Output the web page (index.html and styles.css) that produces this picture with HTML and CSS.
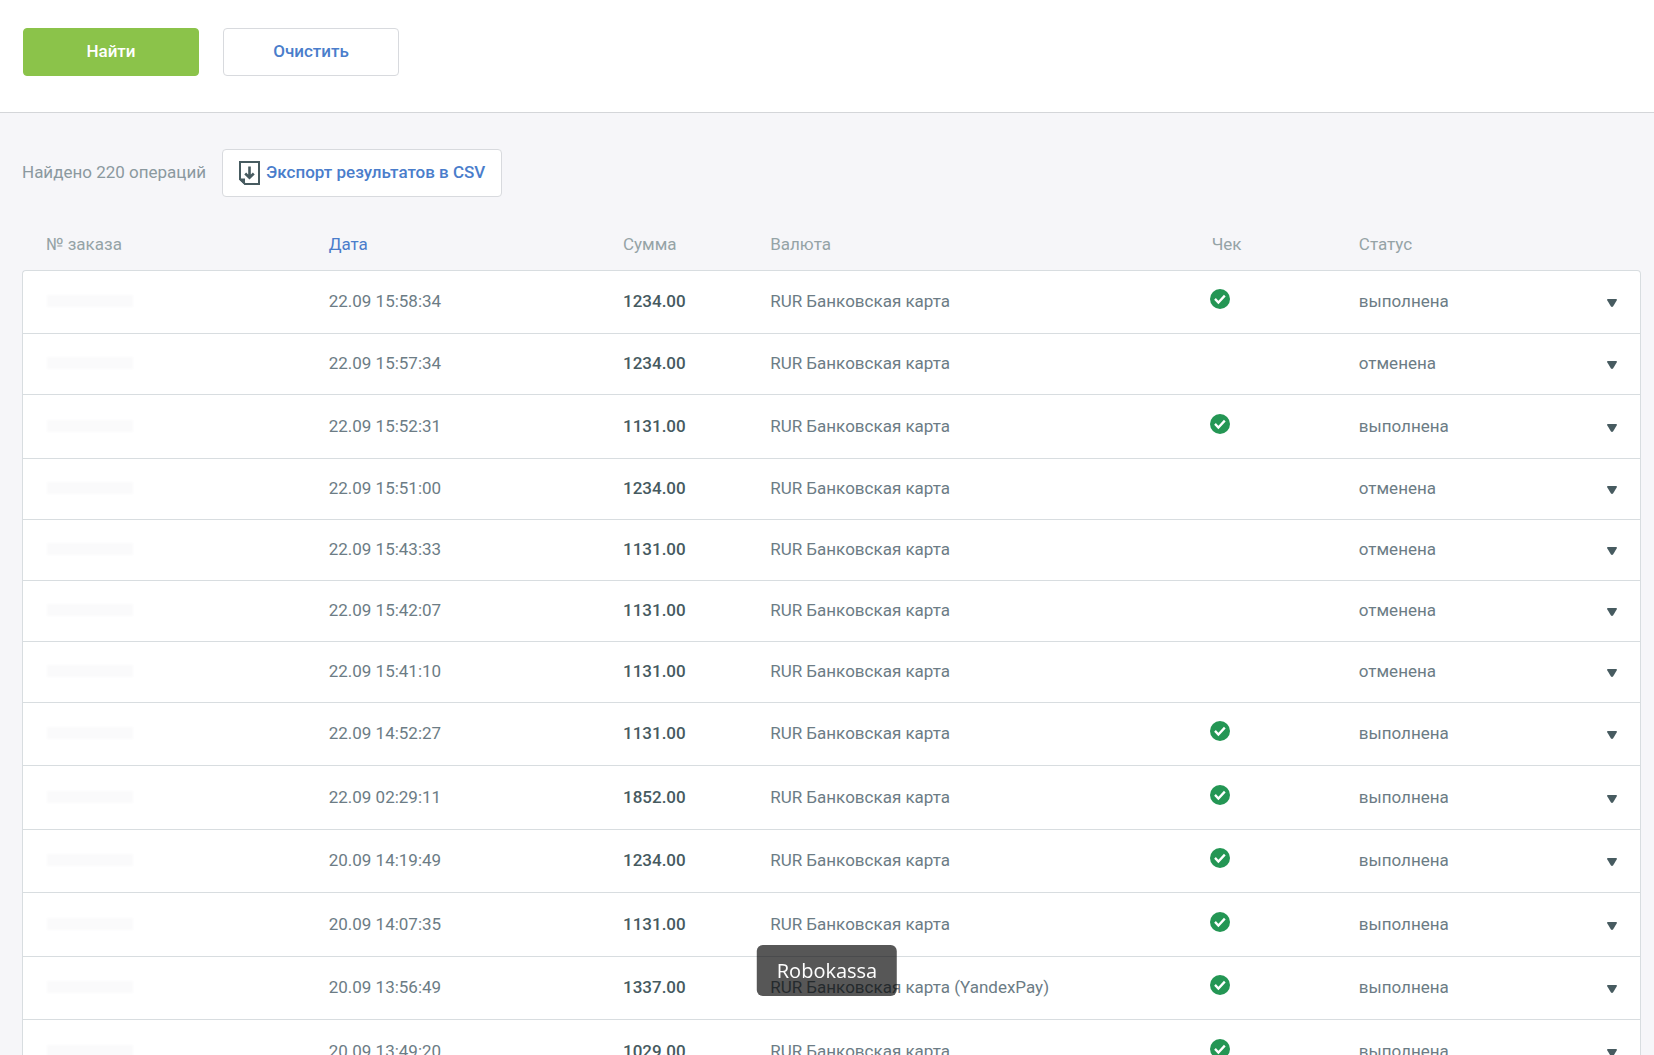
FILE: index.html
```html
<!DOCTYPE html>
<html lang="ru">
<head>
<meta charset="utf-8">
<meta name="viewport" content="width=device-width, initial-scale=1">
<title>Операции</title>
<link rel="stylesheet" href="styles.css">
</head>
<body>
<svg class="sprite" aria-hidden="true">
  <symbol id="check" viewBox="0 0 20 20">
    <circle cx="10" cy="10" r="10" fill="#249654"/>
    <path d="M5 9.900l3.400 3.700 6.400-7" fill="none" stroke="#fff" stroke-width="2.300"/>
  </symbol>
  <symbol id="arrow" viewBox="0 0 10 8">
    <path d="M1 0h8q1.400 0 .8 1.300L6.200 7.200q-1.200 1.400-2.400 0L.2 1.300Q-.4 0 1 0z" fill="#475b60"/>
  </symbol>
</svg>

<form class="filters">
  <button class="btn btn-primary" type="button">Найти</button>
  <button class="btn" type="reset">Очистить</button>
</form>

<main class="results">
  <div class="toolbar">
    <span class="found">Найдено 220 операций</span>
    <button class="btn btn-export" type="button">
      <svg class="icon-export" viewBox="0 0 21 24" aria-hidden="true">
        <path d="M1 1h19v22H6L1 18z" fill="none" stroke="#475b60" stroke-width="2"/>
        <path d="M0 17.500h6V24L0 18.500z" fill="#475b60"/>
        <path d="M10.500 5.500v11M6.200 12.500l4.300 4.200 4.300-4.200" fill="none" stroke="#475b60" stroke-width="2.600"/>
      </svg>
      <span>Экспорт результатов в CSV</span>
    </button>
  </div>

  <table class="operations">
    <colgroup>
      <col class="col-order"><col class="col-date"><col class="col-sum"><col class="col-currency"><col class="col-receipt"><col class="col-status"><col class="col-more">
    </colgroup>
    <thead>
      <tr><th>№ заказа</th><th><a href="#">Дата</a></th><th>Сумма</th><th>Валюта</th><th>Чек</th><th>Статус</th><th></th></tr>
    </thead>
    <tbody>
      <tr class="done"><td><span class="hidden-id"></span></td><td>22.09 15:58:34</td><td class="sum">1234.00</td><td>RUR Банковская карта</td><td class="receipt"><svg class="check"><use href="#check"/></svg></td><td>выполнена</td><td><button class="more" type="button" aria-label="Подробнее"><svg class="arrow"><use href="#arrow"/></svg></button></td></tr>
      <tr><td><span class="hidden-id"></span></td><td>22.09 15:57:34</td><td class="sum">1234.00</td><td>RUR Банковская карта</td><td></td><td>отменена</td><td><button class="more" type="button" aria-label="Подробнее"><svg class="arrow"><use href="#arrow"/></svg></button></td></tr>
      <tr class="done"><td><span class="hidden-id"></span></td><td>22.09 15:52:31</td><td class="sum">1131.00</td><td>RUR Банковская карта</td><td class="receipt"><svg class="check"><use href="#check"/></svg></td><td>выполнена</td><td><button class="more" type="button" aria-label="Подробнее"><svg class="arrow"><use href="#arrow"/></svg></button></td></tr>
      <tr><td><span class="hidden-id"></span></td><td>22.09 15:51:00</td><td class="sum">1234.00</td><td>RUR Банковская карта</td><td></td><td>отменена</td><td><button class="more" type="button" aria-label="Подробнее"><svg class="arrow"><use href="#arrow"/></svg></button></td></tr>
      <tr><td><span class="hidden-id"></span></td><td>22.09 15:43:33</td><td class="sum">1131.00</td><td>RUR Банковская карта</td><td></td><td>отменена</td><td><button class="more" type="button" aria-label="Подробнее"><svg class="arrow"><use href="#arrow"/></svg></button></td></tr>
      <tr><td><span class="hidden-id"></span></td><td>22.09 15:42:07</td><td class="sum">1131.00</td><td>RUR Банковская карта</td><td></td><td>отменена</td><td><button class="more" type="button" aria-label="Подробнее"><svg class="arrow"><use href="#arrow"/></svg></button></td></tr>
      <tr><td><span class="hidden-id"></span></td><td>22.09 15:41:10</td><td class="sum">1131.00</td><td>RUR Банковская карта</td><td></td><td>отменена</td><td><button class="more" type="button" aria-label="Подробнее"><svg class="arrow"><use href="#arrow"/></svg></button></td></tr>
      <tr class="done"><td><span class="hidden-id"></span></td><td>22.09 14:52:27</td><td class="sum">1131.00</td><td>RUR Банковская карта</td><td class="receipt"><svg class="check"><use href="#check"/></svg></td><td>выполнена</td><td><button class="more" type="button" aria-label="Подробнее"><svg class="arrow"><use href="#arrow"/></svg></button></td></tr>
      <tr class="done"><td><span class="hidden-id"></span></td><td>22.09 02:29:11</td><td class="sum">1852.00</td><td>RUR Банковская карта</td><td class="receipt"><svg class="check"><use href="#check"/></svg></td><td>выполнена</td><td><button class="more" type="button" aria-label="Подробнее"><svg class="arrow"><use href="#arrow"/></svg></button></td></tr>
      <tr class="done"><td><span class="hidden-id"></span></td><td>20.09 14:19:49</td><td class="sum">1234.00</td><td>RUR Банковская карта</td><td class="receipt"><svg class="check"><use href="#check"/></svg></td><td>выполнена</td><td><button class="more" type="button" aria-label="Подробнее"><svg class="arrow"><use href="#arrow"/></svg></button></td></tr>
      <tr class="done"><td><span class="hidden-id"></span></td><td>20.09 14:07:35</td><td class="sum">1131.00</td><td>RUR Банковская карта</td><td class="receipt"><svg class="check"><use href="#check"/></svg></td><td>выполнена</td><td><button class="more" type="button" aria-label="Подробнее"><svg class="arrow"><use href="#arrow"/></svg></button></td></tr>
      <tr class="done"><td><span class="hidden-id"></span></td><td>20.09 13:56:49</td><td class="sum">1337.00</td><td>RUR Банковская карта (YandexPay)</td><td class="receipt"><svg class="check"><use href="#check"/></svg></td><td>выполнена</td><td><button class="more" type="button" aria-label="Подробнее"><svg class="arrow"><use href="#arrow"/></svg></button></td></tr>
      <tr class="done"><td><span class="hidden-id"></span></td><td>20.09 13:49:20</td><td class="sum">1029.00</td><td>RUR Банковская карта</td><td class="receipt"><svg class="check"><use href="#check"/></svg></td><td>выполнена</td><td><button class="more" type="button" aria-label="Подробнее"><svg class="arrow"><use href="#arrow"/></svg></button></td></tr>
    </tbody>
  </table>
</main>

<div class="caption" role="tooltip">Robokassa</div>
</body>
</html>
```

FILE: styles.css
```css
* {
  box-sizing: border-box;
}

body {
  margin: 0;
  background: #f6f6f9;
  color: #6c7c85;
  font: 17px/20px Roboto, "Liberation Sans", sans-serif;
}

.sprite {
  display: none;
}

.filters {
  display: flex;
  gap: 24px;
  padding: 28px 23px 36px;
  background: #fff;
  border-bottom: 1px solid #d4d6d9;
}

.btn {
  display: flex;
  align-items: center;
  justify-content: center;
  width: 176px;
  height: 48px;
  padding: 0 0 2px;
  border: 1px solid #d8dade;
  border-radius: 4px;
  background: #fff;
  color: #4a7dcb;
  font: inherit;
  font-weight: 500;
  cursor: pointer;
}

.btn-primary {
  border-color: #8bc34a;
  background: #8bc34a;
  color: #fff;
}

.results {
  padding: 36px 13px 0 22px;
}

.toolbar {
  display: flex;
  align-items: center;
  gap: 16px;
}

.found {
  padding-bottom: 2px;
  color: #8b999f;
}

.btn-export {
  gap: 6px;
  width: auto;
  padding: 0 16px 2px;
}

.icon-export {
  width: 21px;
  height: 24px;
  margin-top: 2px;
}

.operations {
  width: 100%;
  margin-top: 24px;
  table-layout: fixed;
  border-collapse: separate;
  border-spacing: 0;
}

.col-order { width: 17.46%; }
.col-date { width: 18.18%; }
.col-sum { width: 9.09%; }
.col-currency { width: 27.27%; }
.col-receipt { width: 9.09%; }
.col-status { width: 13%; }
.col-more { width: 5.91%; }

th {
  height: 49px;
  padding: 0 0 4px 24px;
  color: #95a3a6;
  font-weight: 400;
  text-align: left;
}

th a {
  color: #4a7dcb;
  text-decoration: none;
}

td {
  height: 61px;
  padding: 0 0 2px 24px;
  background: #fff;
  border-bottom: 1px solid #d8dde0;
  vertical-align: middle;
  white-space: nowrap;
}

.done td {
  height: 64px;
}

.done:nth-child(even) td {
  height: 63px;
}

td:first-child {
  border-left: 1px solid #d8dde0;
}

td:last-child {
  padding: 0 23px 2px 0;
  border-right: 1px solid #d8dde0;
  text-align: right;
}

tbody tr:first-child td {
  border-top: 1px solid #d8dde0;
}

tbody tr:first-child td:first-child {
  border-top-left-radius: 4px;
}

tbody tr:first-child td:last-child {
  border-top-right-radius: 4px;
}

.sum {
  color: #465a5f;
  font-weight: 500;
}

.hidden-id {
  display: block;
  width: 86px;
  height: 12px;
  background: #fafafb;
  filter: blur(1px);
}

.receipt {
  padding: 0 0 6px 22px;
}

.check {
  display: block;
  width: 20px;
  height: 20px;
}

.more {
  padding: 0;
  border: 0;
  background: none;
  cursor: pointer;
}

.arrow {
  display: block;
  width: 10px;
  height: 8px;
}

.caption {
  position: fixed;
  bottom: 59px;
  left: 50%;
  padding: 12px 20px;
  border-radius: 6px;
  background: rgba(0, 0, 0, 0.66);
  color: #fff;
  font: 20px/27px "Open Sans", "Noto Sans", sans-serif;
  transform: translateX(-50%);
}
```
